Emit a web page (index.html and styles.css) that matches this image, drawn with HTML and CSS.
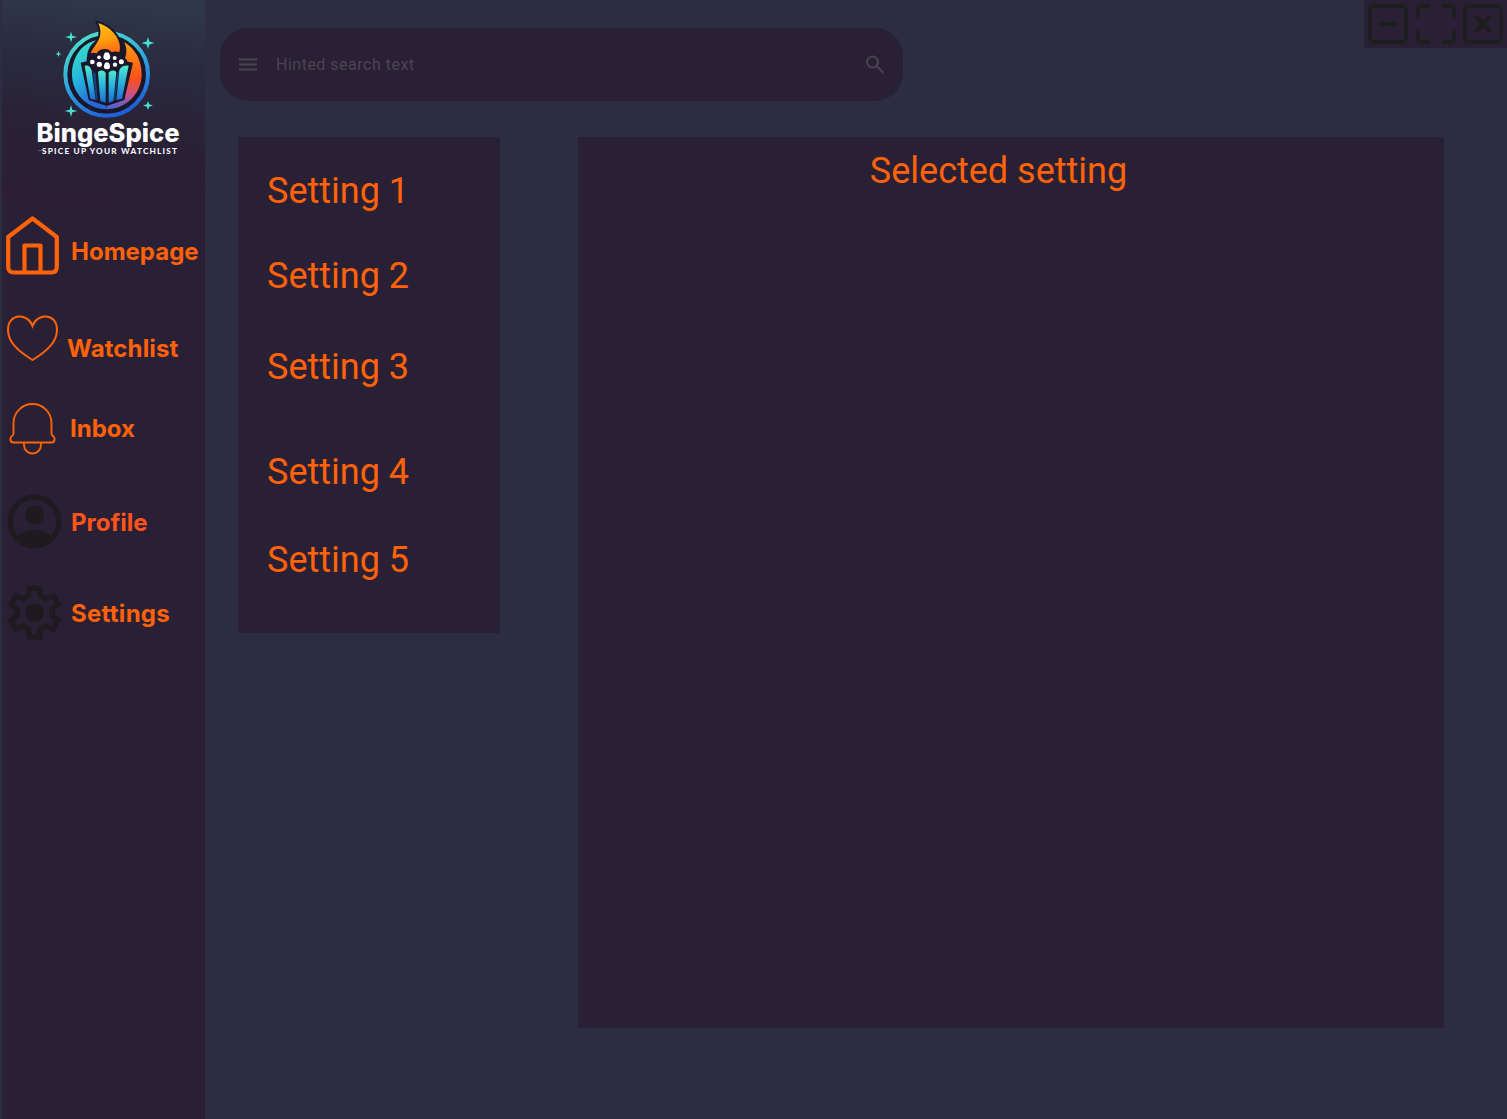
FILE: index.html
```html
<!DOCTYPE html>
<html lang="en">
<head>
<meta charset="utf-8">
<title>BingeSpice – Settings</title>
<link rel="stylesheet" href="styles.css">
</head>
<body>
<div class="app">
  <aside class="sidebar">
    <svg class="logo" viewBox="0 0 203 203" role="img" aria-label="BingeSpice">
      <defs>
        <linearGradient id="ground" x1="0.6" y1="0" x2="0.5" y2="1">
          <stop offset="0" stop-color="#2f384a"/><stop offset=".3" stop-color="#2a2b3f"/><stop offset=".65" stop-color="#292136"/><stop offset="1" stop-color="#2b1e35"/>
        </linearGradient>
        <linearGradient id="ring" x1=".2" y1="0" x2=".6" y2="1">
          <stop offset="0" stop-color="#4de3c8"/><stop offset=".5" stop-color="#2fa6dc"/><stop offset="1" stop-color="#1f5fd8"/>
        </linearGradient>
        <linearGradient id="cool" x1="0" y1="0" x2=".4" y2="1">
          <stop offset="0" stop-color="#3cebc0"/><stop offset=".55" stop-color="#25b4dc"/><stop offset="1" stop-color="#2565d8"/>
        </linearGradient>
        <linearGradient id="warm" x1=".2" y1="0" x2=".2" y2="1">
          <stop offset="0" stop-color="#ff9c0c"/><stop offset=".55" stop-color="#ff4f1c"/><stop offset=".8" stop-color="#c4528c"/><stop offset="1" stop-color="#3c64d8"/>
        </linearGradient>
        <linearGradient id="flame" x1="0" y1="0" x2=".2" y2="1">
          <stop offset="0" stop-color="#ffc61a"/><stop offset=".5" stop-color="#ffa010"/><stop offset="1" stop-color="#ff5a14"/>
        </linearGradient>
        <linearGradient id="stripe" x1="0" y1="0" x2="0" y2="1">
          <stop offset="0" stop-color="#4ee8cf"/><stop offset=".6" stop-color="#22a5dc"/><stop offset="1" stop-color="#216bd4"/>
        </linearGradient>
      </defs>
      <rect width="203" height="203" fill="url(#ground)"/>
      <g transform="translate(58 20) scale(.33333)">
        <circle cx="140" cy="163" r="124" fill="#1a172b" stroke="url(#ring)" stroke-width="12"/>
        <path d="M108 61C66 70 36 112 36 163c0 58 46 105 104 105V125H84C76 100 88 78 108 61Z" fill="url(#cool)"/>
        <path d="M192 66c34 20 53 54 53 97 0 58-47 105-105 105V125h50c12-20 12-42 2-59Z" fill="url(#warm)"/>
        <path d="M115 10c34 8 72 46 64 84l-10 26H90C84 80 140 66 115 10Z" fill="url(#flame)" stroke="#1a172b" stroke-width="12" stroke-linejoin="miter" paint-order="stroke"/>
        <path d="M62 128 80 124C78 104 94 94 110 100 118 84 146 82 155 97c20-8 34 4 34 18 10-2 12 6 14 10l16 3-26 112-53 18-54-18Z" fill="#1a172b"/>
        <g fill="url(#stripe)">
          <path d="M74 138c8-4 18 2 21 14l12 88-16-4Z"/>
          <path d="M114 158c1-10 22-8 23 2v88l-16-5Z"/>
          <path d="M146 160c1-10 22-12 23-2l-9 85-14 5Z"/>
          <path d="M178 150c4-10 15-14 28-13l-20 99-17 5Z"/>
        </g>
        <g fill="#0e447c"><path d="M98 150l9 12 6 78-5-1ZM172 158l4-4-11 86-4 2Z"/></g>
        <g fill="#fff">
          <path d="M132 104c0-10 17-10 17 0 5 9-1 16-8 16s-14-7-9-16Z"/>
          <path d="M133 134c1-10 15-10 16 0 4 9-2 14-8 14s-12-5-8-14Z"/>
          <circle cx="117" cy="112" r="5.500"/><circle cx="164" cy="114" r="6"/>
          <circle cx="97" cy="126" r="7"/><circle cx="118" cy="133" r="8"/><circle cx="165" cy="134" r="6.500"/><circle cx="184" cy="125" r="7.500"/>
        </g>
      </g>
      <g fill="#48dfce">
        <path d="M69 31.500l1.200 4.300 4.800 1.200-4.800 1.200L69 42.500l-1.200-4.300L63 37l4.800-1.200Z"/>
        <path d="M146 37l1.400 4.600 5.100 1.400-5.100 1.400L146 49l-1.400-4.600-5.100-1.400 5.100-1.400Z"/>
        <path d="M56.500 51l.8 2.200 2.200.8-2.200.8-.8 2.200-.8-2.200-2.200-.8 2.200-.8Z"/>
        <path d="M69 105l1.300 4.700 5.200 1.300-5.200 1.300L69 117l-1.300-4.700-5.200-1.300 5.200-1.300Z"/>
        <path d="M146 101l1.200 3.300 3.800 1.200-3.800 1.200L146 110l-1.200-3.300-3.800-1.200 3.800-1.200Z"/>
      </g>
      <text class="logo-name" x="34.500" y="141.500" textLength="143" lengthAdjust="spacingAndGlyphs">BingeSpice</text>
      <path d="M36 150.500h4" stroke="#657083" stroke-width=".8"/>
      <text class="logo-tag" x="40" y="153.700" textLength="135">SPICE UP YOUR WATCHLIST</text>
    </svg>
    <nav class="nav">
      <a class="nav-item home">
        <svg width="53" height="60" viewBox="0 0 53 60" fill="none" stroke="currentColor" stroke-width="4.200" stroke-linejoin="round"><path d="M2.200 22 26.500 3.500 50.800 22v30q0 5.500-5.500 5.500h-37.600q-5.500 0-5.500-5.500Z"/><path d="M18.500 57V30.500h16V57" stroke-linejoin="round"/></svg>
        <span>Homepage</span>
      </a>
      <a class="nav-item watch">
        <svg width="53" height="48" viewBox="0 0 53 48" fill="none" stroke="currentColor" stroke-width="2"><path d="M26.500 12C22-1 2-1.500 2 16c0 12 10 21 24.500 30C41 37 51 28 51 16 51-1.500 31-1 26.500 12Z"/></svg>
        <span>Watchlist</span>
      </a>
      <a class="nav-item inbox">
        <svg width="47" height="53" viewBox="0 0 47 53" fill="none" stroke="currentColor" stroke-width="1.900"><path d="M4.500 21a19 19 0 0 1 38 0V31.500q0 1.500 1.500 2.500 2 1.500 1.500 4-.5 2.500-3 2.500h-38Q2 40.500 1.500 38 1 35.500 3 34q1.500-1 1.500-2.500Z"/><path d="M15 40.500V43a8.500 8.500 0 0 0 17 0v-2.500"/></svg>
        <span>Inbox</span>
      </a>
      <a class="nav-item profile">
        <svg width="65" height="65" viewBox="0 0 24 24" fill="#1d1b20"><path fill-rule="evenodd" d="M12 2a10 10 0 1 0 0 20 10 10 0 0 0 0-20Zm0 2a8 8 0 0 1 6.150 13.130C16.400 15.700 14.300 15 12 15s-4.400.7-6.150 2.130A8 8 0 0 1 12 4Z"/><circle cx="12" cy="9.500" r="3.500"/></svg>
        <span>Profile</span>
      </a>
      <a class="nav-item gear">
        <svg width="65" height="65" viewBox="0 0 24 24" fill="#1d1b20"><path d="m9.250 22-.4-3.200q-.325-.125-.612-.3-.288-.175-.563-.375L4.700 19.375l-2.750-4.750 2.575-1.950Q4.500 12.500 4.500 12.337v-.675q0-.162.025-.337L1.950 9.375l2.750-4.750 2.975 1.250q.275-.2.575-.375.300-.175.600-.300L9.250 2h5.500l.4 3.200q.325.125.612.300.288.175.563.375L19.300 4.625l2.750 4.750-2.575 1.950q.025.175.025.337v.675q0 .163-.05.338l2.575 1.950-2.750 4.750-2.950-1.250q-.275.200-.575.375-.300.175-.600.300L14.750 22ZM11 20h1.975l.35-2.650q.775-.200 1.437-.588.663-.387 1.213-.937l2.475 1.025.975-1.700-2.150-1.625q.125-.350.175-.737.050-.388.050-.788t-.05-.787q-.05-.388-.175-.738l2.150-1.625-.975-1.700-2.475 1.050q-.550-.575-1.213-.963-.662-.387-1.437-.587L13 4h-1.975l-.35 2.650q-.775.200-1.438.587-.662.388-1.212.938L5.550 7.150l-.975 1.700 2.150 1.600q-.125.375-.175.750-.050.375-.050.800 0 .400.050.775t.175.750l-2.150 1.625.975 1.700 2.475-1.050q.550.575 1.212.963.663.387 1.438.587Z"/><circle cx="12" cy="12" r="3.500"/></svg>
        <span>Settings</span>
      </a>
    </nav>
  </aside>
  <main class="main">
    <header class="topbar">
      <div class="search">
        <svg width="24" height="24" viewBox="0 -.5 24 24"><path d="M3 18v-2h18v2H3Zm0-5v-2h18v2H3Zm0-5V6h18v2H3Z"/></svg>
        <span class="hint">Hinted search text</span>
        <svg width="24" height="24" viewBox="0 -.5 24 24"><path d="m19.600 21-6.300-6.300A6.100 6.100 0 0 1 9.500 16a6.500 6.500 0 1 1 6.500-6.500 6.100 6.100 0 0 1-1.300 3.800l6.300 6.300ZM9.500 14a4.500 4.500 0 1 0 0-9 4.500 4.500 0 0 0 0 9Z"/></svg>
      </div>
      <div class="window-controls">
        <svg width="40" height="40" viewBox="0 0 40 40"><rect x="2" y="2" width="36" height="36" rx="4"/><path d="M12 20h16"/></svg>
        <svg width="40" height="40" viewBox="0 0 40 40"><path d="M2 12V6q0-4 4-4h6M28 2h6q4 0 4 4v6M38 28v6q0 4-4 4h-6M12 38H6q-4 0-4-4v-6"/></svg>
        <svg width="40" height="40" viewBox="0 0 40 40"><rect x="2" y="2" width="36" height="36" rx="4"/><path d="m14 14 12 12M26 14 14 26"/></svg>
      </div>
    </header>
    <div class="content">
      <ul class="setting-list">
        <li>Setting 1</li>
        <li>Setting 2</li>
        <li>Setting 3</li>
        <li>Setting 4</li>
        <li>Setting 5</li>
      </ul>
      <section class="detail"><h1>Selected setting</h1></section>
    </div>
  </main>
</div>
</body>
</html>
```
FILE: styles.css
```css
* { box-sizing: border-box; }
body { margin: 0; background: #2c2d41; }
.app { display: flex; height: 1119px; padding-left: 2px; overflow: hidden; }
svg { display: block; flex: none; }

.sidebar { width: 203px; flex: none; background: #2a2035; }
.logo { width: 203px; height: 203px; }
.logo-name { font: 800 25.500px Inter, sans-serif; fill: #fff; }
.logo-tag { font: 900 8.200px Lato, sans-serif; fill: #f4f7fc; }

.nav { display: flex; flex-direction: column; color: #ff6208; font: 700 24px/30px Inter, sans-serif; }
.nav-item { display: flex; align-items: flex-start; }
.home { padding: 12px 0 0 4px; height: 109px; gap: 12px; }
.home span { margin-top: 22px; }
.watch { padding: 2px 0 0 4px; height: 89px; gap: 8px; }
.watch span { margin-top: 20px; letter-spacing: .12px; }
.inbox { padding: 1px 0 0 7px; height: 88px; gap: 14px; }
.inbox span { margin-top: 12px; }
.profile { height: 91px; gap: 4px; }
.profile span { margin-top: 19px; color: #ff5319; }
.gear { gap: 4px; }
.gear span { margin-top: 19px; letter-spacing: .28px; }

.main { flex: 1; min-width: 0; }
.topbar { display: flex; justify-content: space-between; align-items: flex-start; height: 137px; padding-left: 15px; }
.search { display: flex; align-items: center; width: 683px; height: 73px; margin-top: 28px; padding: 0 16px 1px; gap: 16px; border-radius: 28px; background: #2a2035; color: #49454f; fill: currentColor; }
.hint { flex: 1; padding-top: 2px; font: 400 16px/24px Roboto, sans-serif; letter-spacing: .5px; }
.window-controls { display: flex; gap: 7.500px; width: 143px; height: 48px; padding: 4px; background: #2a2035; fill: none; stroke: #1e1e1e; stroke-width: 4; stroke-linecap: round; }
.content { display: flex; align-items: flex-start; gap: 78px; padding-left: 33px; color: #ff6208; font: 400 36px/42px Roboto, sans-serif; }
.setting-list { width: 262px; height: 496px; margin: 0; padding: 33px 29px; list-style: none; background: #2a2035; }
.setting-list li { height: 85px; }
.setting-list li:nth-child(2) { height: 91px; }
.setting-list li:nth-child(3) { height: 105px; }
.setting-list li:nth-child(4) { height: 88px; }
.setting-list li:nth-child(5) { height: 42px; }
.detail { width: 866px; height: 891px; padding: 13px 25px 0 0; background: #2a2035; }
.detail h1 { margin: 0; font: inherit; text-align: center; }
```
